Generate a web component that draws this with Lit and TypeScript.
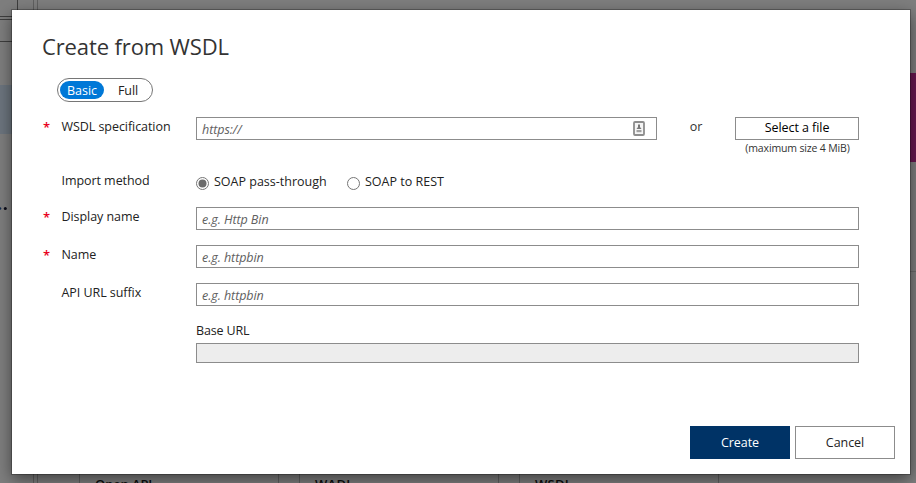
import { LitElement, html, css, svg } from "lit";
import { customElement, property, state } from "lit/decorators.js";
import { classMap } from "lit/directives/class-map.js";

@customElement("form-row")
class FormRow extends LitElement {
  @property() label = "";
  @property({ type: Boolean }) required = false;

  static styles = css`
    :host { display: flex; align-items: flex-start; height: 38px; }
    .star { width: 19.5px; flex: none; color: #e8001c; font-size: 13px; font-weight: 600; line-height: 20px; padding-left: 1px; box-sizing: border-box; }
    .label { width: 134.5px; flex: none; line-height: 19px; white-space: nowrap; }
    .body { flex: 1; display: flex; align-items: flex-start; }
  `;

  render() {
    return html`
      <span class="star">${this.required ? "*" : ""}</span>
      <span class="label">${this.label}</span>
      <div class="body"><slot></slot></div>
    `;
  }
}

@customElement("app-root")
class AppRoot extends LitElement {
  @state() private mode = "Basic";
  @state() private method = "SOAP pass-through";

  static styles = css`
    :host {
      display: block; position: relative; width: 916px; height: 483px; overflow: hidden;
      background: #7e7e7e; color: #222;
      font: 12.5px "Open Sans", "Noto Sans", sans-serif; letter-spacing: -0.06px;
    }
    .page { position: absolute; inset: 0; }
    .page svg { display: block; }
    .ghost { font: 600 13px "Open Sans", sans-serif; fill: #0c0c0c; letter-spacing: 0.3px; }
    .tight { letter-spacing: -0.1px; }
    .dialog {
      position: absolute; left: 12px; top: 10px; width: 898px; height: 464px;
      box-sizing: border-box; background: #fff; display: flex; flex-direction: column;
      padding: 22px 15px 15px 30px;
      box-shadow: 0 0 0 1px rgba(0,0,0,.25), 0 5px 15px rgba(0,0,0,.5);
    }
    h1 { margin: 0; font-size: 22px; font-weight: 400; line-height: 28px; letter-spacing: -0.12px; color: #333; }
    .toggle {
      display: flex; align-items: center; box-sizing: border-box; width: 96px; height: 24px;
      margin: 18px 0 15px 15px; padding: 0 2px; border: 1px solid #767676; border-radius: 12px;
    }
    .opt { width: 44px; height: 18px; line-height: 19px; border-radius: 9px; text-align: center; flex: none; }
    .opt + .opt { margin-left: 2px; }
    .on { background: #0078d7; color: #fff; }
    .input {
      box-sizing: border-box; width: 663px; height: 23px; border: 1px solid #8c8c8c; padding: 1px 5px 0;
      line-height: 21px; font-style: italic; color: #606060; display: flex; align-items: flex-start; justify-content: space-between;
    }
    .short { width: 461px; padding-right: 11px; }
    .short svg { margin-top: 2px; }
    .or { width: 78px; text-align: center; line-height: 19px; color: #333; }
    .upload { display: flex; flex-direction: column; width: 124px; }
    .file { box-sizing: border-box; height: 23px; border: 1px solid #8c8c8c; text-align: center; line-height: 20px; color: #000; }
    .hint { font-size: 10.5px; line-height: 16px; text-align: center; padding-left: 1px; color: #333; letter-spacing: -0.15px; }
    .spec { height: 54px; }
    .import { height: 36px; }
    .radio { display: flex; align-items: flex-start; line-height: 21px; letter-spacing: 0; }
    .radio svg { margin: 6px 5px 0 0; flex: none; }
    .first { width: 151px; }
    .base { margin-left: 154px; width: 663px; }
    .base .cap { line-height: 19px; letter-spacing: -0.15px; }
    .base .box { box-sizing: border-box; height: 20px; margin-top: 3px; border: 1px solid #8c8c8c; background: #ededed; }
    .actions { display: flex; justify-content: flex-end; gap: 5px; margin-top: auto; }
    .btn { box-sizing: border-box; width: 100px; height: 33px; line-height: 31px; text-align: center; border: 1px solid #8c8c8c; }
    .primary { background: #003366; border-color: #003366; color: #fff; }
  `;

  private radio(name: string, first: boolean) {
    return html`<div class=${classMap({ radio: true, first })} @click=${() => (this.method = name)}>
      <svg width="13" height="13" viewBox="0 0 13 13">
        <circle cx="6.5" cy="6.5" r="6" fill="#fff" stroke="#767676" />
        ${this.method === name ? svg`<circle cx="6.5" cy="6.5" r="4" fill="#6b6b6b" />` : ""}
      </svg>${name}</div>`;
  }

  render() {
    return html`
      <div class="page">
        <svg width="916" height="483" viewBox="0 0 916 483">
          <rect y="85" width="12" height="49" fill="#6c757e" />
          <g fill="none" stroke="#3e3e3e">
            <path d="M17.5 0V16M0 16.5H17M0 19.5H12M0 41.5H12" />
            <path d="M33.5 0V10M37.5 0V10M33.5 474V483M37.5 474V483" stroke="#606060" />
            <path d="M79.5 474V483M278.5 474V483M299.5 474V483M498.5 474V483M519.5 474V483M718.5 474V483" stroke="#606060" />
          </g>
          <path d="M910 271.5H916" stroke="#6a6a6a" />
          <rect x="910" y="73" width="6" height="89" fill="#68174f" />
          <circle cx="0" cy="208.5" r="1.3" fill="#102a50" />
          <circle cx="5.3" cy="208.5" r="1.5" fill="#0b0b18" />
          <text class="ghost tight" x="95" y="489">Open API</text>
          <text class="ghost" x="315" y="489">WADL</text>
          <text class="ghost" x="535" y="489">WSDL</text>
        </svg>
      </div>
      <div class="dialog">
        <h1>Create from WSDL</h1>
        <div class="toggle">
          ${["Basic", "Full"].map((m) => html`<span class=${classMap({ opt: true, on: this.mode === m })} @click=${() => (this.mode = m)}>${m}</span>`)}
        </div>
        <form-row class="spec" label="WSDL specification" required>
          <div class="input short">https://
            <svg width="12" height="15" viewBox="0 0 12 15">
              <rect x="1" y="1" width="10" height="13" rx="1" fill="#f5f5f5" stroke="#8d8d8d" stroke-width="1.8" />
              <path d="M5 3.5h2V6l1.5 2h-5L5 6z" fill="#777" />
              <path d="M3.5 9h5v2.2h-5z" fill="#a0a0a0" />
            </svg>
          </div>
          <span class="or">or</span>
          <div class="upload"><span class="file">Select a file</span><span class="hint">(maximum size 4 MiB)</span></div>
        </form-row>
        <form-row class="import" label="Import method">
          ${this.radio("SOAP pass-through", true)}${this.radio("SOAP to REST", false)}
        </form-row>
        <form-row label="Display name" required><div class="input">e.g. Http Bin</div></form-row>
        <form-row label="Name" required><div class="input">e.g. httpbin</div></form-row>
        <form-row label="API URL suffix"><div class="input">e.g. httpbin</div></form-row>
        <div class="base"><div class="cap">Base URL</div><div class="box"></div></div>
        <div class="actions"><div class="btn primary">Create</div><div class="btn">Cancel</div></div>
      </div>
    `;
  }
}
